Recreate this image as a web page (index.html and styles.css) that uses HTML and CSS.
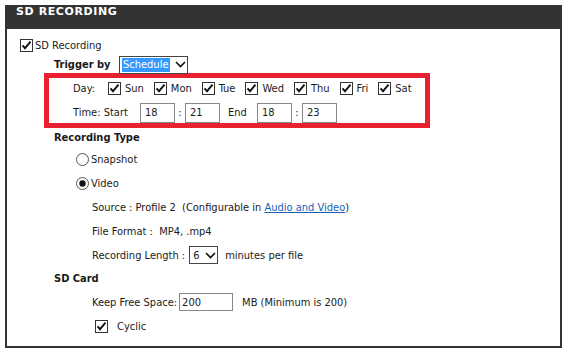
FILE: index.html
```html
<!DOCTYPE html>
<html>
  <head>
    <title>SD Recording</title>
    <meta http-equiv="content-type" content="text/html;charset=utf-8">
    <link rel="stylesheet" href="styles.css">
  </head>
  <body>
    <div class="panel">
      <div class="head">SD RECORDING</div>
      <div class="box">
        <div class="row r-enable">
          <svg class="cb" width="13" height="13" viewBox="0 0 13 13"><rect x="0.5" y="0.5" width="12" height="12" fill="#fff" stroke="#333"/><path d="M2.5 6.3 L5 9.2 L10.5 2.6" fill="none" stroke="#111" stroke-width="1.9"/></svg>
          <span>SD Recording</span>
        </div>
        <div class="row r-trigger">
          <b class="lbl">Trigger by</b>
          <span class="select sched"><span class="hl">Schedule</span><svg class="chev" width="11" height="7" viewBox="0 0 11 7"><path d="M1 1 L5.5 5.5 L10 1" fill="none" stroke="#111" stroke-width="1.6"/></svg></span>
        </div>
        <div class="mark">
          <div class="row r-day">
            <span class="day-lbl">Day:</span>
            <span class="day"><svg class="cb" width="13" height="13" viewBox="0 0 13 13"><rect x="0.5" y="0.5" width="12" height="12" fill="#fff" stroke="#333"/><path d="M2.5 6.3 L5 9.2 L10.5 2.6" fill="none" stroke="#111" stroke-width="1.9"/></svg>Sun</span>
            <span class="day"><svg class="cb" width="13" height="13" viewBox="0 0 13 13"><rect x="0.5" y="0.5" width="12" height="12" fill="#fff" stroke="#333"/><path d="M2.5 6.3 L5 9.2 L10.5 2.6" fill="none" stroke="#111" stroke-width="1.9"/></svg>Mon</span>
            <span class="day"><svg class="cb" width="13" height="13" viewBox="0 0 13 13"><rect x="0.5" y="0.5" width="12" height="12" fill="#fff" stroke="#333"/><path d="M2.5 6.3 L5 9.2 L10.5 2.6" fill="none" stroke="#111" stroke-width="1.9"/></svg>Tue</span>
            <span class="day"><svg class="cb" width="13" height="13" viewBox="0 0 13 13"><rect x="0.5" y="0.5" width="12" height="12" fill="#fff" stroke="#333"/><path d="M2.5 6.3 L5 9.2 L10.5 2.6" fill="none" stroke="#111" stroke-width="1.9"/></svg>Wed</span>
            <span class="day"><svg class="cb" width="13" height="13" viewBox="0 0 13 13"><rect x="0.5" y="0.5" width="12" height="12" fill="#fff" stroke="#333"/><path d="M2.5 6.3 L5 9.2 L10.5 2.6" fill="none" stroke="#111" stroke-width="1.9"/></svg>Thu</span>
            <span class="day"><svg class="cb" width="13" height="13" viewBox="0 0 13 13"><rect x="0.5" y="0.5" width="12" height="12" fill="#fff" stroke="#333"/><path d="M2.5 6.3 L5 9.2 L10.5 2.6" fill="none" stroke="#111" stroke-width="1.9"/></svg>Fri</span>
            <span class="day"><svg class="cb" width="13" height="13" viewBox="0 0 13 13"><rect x="0.5" y="0.5" width="12" height="12" fill="#fff" stroke="#333"/><path d="M2.5 6.3 L5 9.2 L10.5 2.6" fill="none" stroke="#111" stroke-width="1.9"/></svg>Sat</span>
          </div>
          <div class="row r-time">
            <span class="time-lbl">Time: Start</span>
            <span class="field t">18</span>
            <span class="colon">:</span>
            <span class="field t">21</span>
            <span class="end-lbl">End</span>
            <span class="field t">18</span>
            <span class="colon">:</span>
            <span class="field t">23</span>
          </div>
        </div>
        <div class="row r-head"><b class="lbl">Recording Type</b></div>
        <div class="row r-radio">
          <svg class="rd" width="13" height="13" viewBox="0 0 13 13"><circle cx="6.5" cy="6.5" r="6" fill="#fff" stroke="#555"/></svg>
          <span>Snapshot</span>
        </div>
        <div class="row r-radio">
          <svg class="rd" width="13" height="13" viewBox="0 0 13 13"><circle cx="6.5" cy="6.5" r="6" fill="#fff" stroke="#555"/><circle cx="6.5" cy="6.5" r="3.2" fill="#111"/></svg>
          <span>Video</span>
        </div>
        <div class="row r-info">Source : Profile 2&nbsp; (Configurable in&nbsp;<a href="#">Audio and Video</a>)</div>
        <div class="row r-info">File Format :&nbsp; MP4, .mp4</div>
        <div class="row r-info">
          <span>Recording Length :</span>
          <span class="select len"><span class="val">6</span><svg class="chev" width="11" height="7" viewBox="0 0 11 7"><path d="M1 1 L5.5 5.5 L10 1" fill="none" stroke="#111" stroke-width="1.6"/></svg></span>
          <span>minutes per file</span>
        </div>
        <div class="row r-head2"><b class="lbl">SD Card</b></div>
        <div class="row r-info">
          <span>Keep Free Space:</span>
          <span class="field free">200</span>
          <span class="mb">MB (Minimum is 200)</span>
        </div>
        <div class="row r-cyclic">
          <svg class="cb" width="13" height="13" viewBox="0 0 13 13"><rect x="0.5" y="0.5" width="12" height="12" fill="#fff" stroke="#333"/><path d="M2.5 6.3 L5 9.2 L10.5 2.6" fill="none" stroke="#111" stroke-width="1.9"/></svg>
          <span>Cyclic</span>
        </div>
      </div>
    </div>
  </body>
</html>
```

FILE: styles.css
```css
body {
  margin: 0;
  background: #fff;
  color: #1a1a1a;
  font: 11px "DejaVu Sans Condensed", "DejaVu Sans", sans-serif;
  font-stretch: condensed;
}

.panel {
  margin: 5px 0 0 5px;
  width: 557px;
}

.head {
  height: 24px;
  line-height: 24px;
  padding-left: 11px;
  background: #333;
  color: #fff;
  font: bold 11px "DejaVu Sans", sans-serif;
  letter-spacing: 0.6px;
}

.box {
  height: 319px;
  box-sizing: border-box;
  border: 2px solid #333;
  border-top: 0;
  padding-top: 6px;
}

.row {
  display: flex;
  align-items: center;
  white-space: nowrap;
}

.lbl {
  font-weight: bold;
}

.cb,
.rd {
  display: block;
  flex: none;
}

.r-enable {
  height: 20px;
  padding-left: 13px;
}
.r-enable .cb {
  margin-right: 2px;
}

.r-trigger {
  height: 19px;
  padding-left: 47px;
  margin-bottom: -1px;
}
.r-trigger .lbl {
  width: 65px;
}

.select {
  display: flex;
  align-items: center;
  box-sizing: border-box;
  border: 1px solid #444;
  background: #fff;
}
.select .chev {
  display: block;
}

.sched {
  width: 69px;
  height: 18px;
  padding-left: 2px;
}
.sched .hl {
  background: #3399ff;
  color: #fff;
  padding: 0 1px;
  line-height: 14px;
  margin-right: 5px;
}

.mark {
  margin-left: 37px;
  width: 386px;
  box-sizing: border-box;
  border: 5px solid #e8202f;
  height: 55px;
  padding-left: 24px;
}

.r-day {
  height: 20px;
  margin-bottom: 4px;
}
.day-lbl {
  width: 35px;
}
.day {
  display: flex;
  align-items: center;
  margin-right: 10px;
}
.day .cb {
  margin-right: 4px;
}

.r-time {
  height: 21px;
}
.time-lbl {
  width: 67px;
}
.field {
  box-sizing: border-box;
  border: 1px solid #888;
  background: #fff;
  padding-left: 4px;
  display: flex;
  align-items: center;
}
.field.t {
  width: 35px;
  height: 20px;
}
.colon {
  width: 10px;
  text-align: center;
}
.end-lbl {
  margin-left: 8px;
  width: 29px;
}

.r-head {
  height: 19px;
  padding-left: 47px;
}

.r-radio {
  height: 24px;
  padding-left: 69px;
}
.r-radio .rd {
  margin-right: 2px;
}

.r-info {
  height: 24px;
  padding-left: 85px;
}

a {
  color: #1a5fb4;
  text-decoration: underline;
}

.len {
  width: 29px;
  height: 18px;
  margin: 0 7px 0 4px;
  padding-left: 3px;
}
.len .val {
  margin-right: 6px;
}

.r-head2 {
  height: 23px;
  padding-left: 47px;
}

.field.free {
  width: 54px;
  height: 18px;
  margin-left: 2px;
  padding-left: 2px;
}
.mb {
  margin-left: 9px;
}

.r-cyclic {
  height: 24px;
  padding-left: 88px;
}
.r-cyclic .cb {
  margin-right: 9px;
}
```
